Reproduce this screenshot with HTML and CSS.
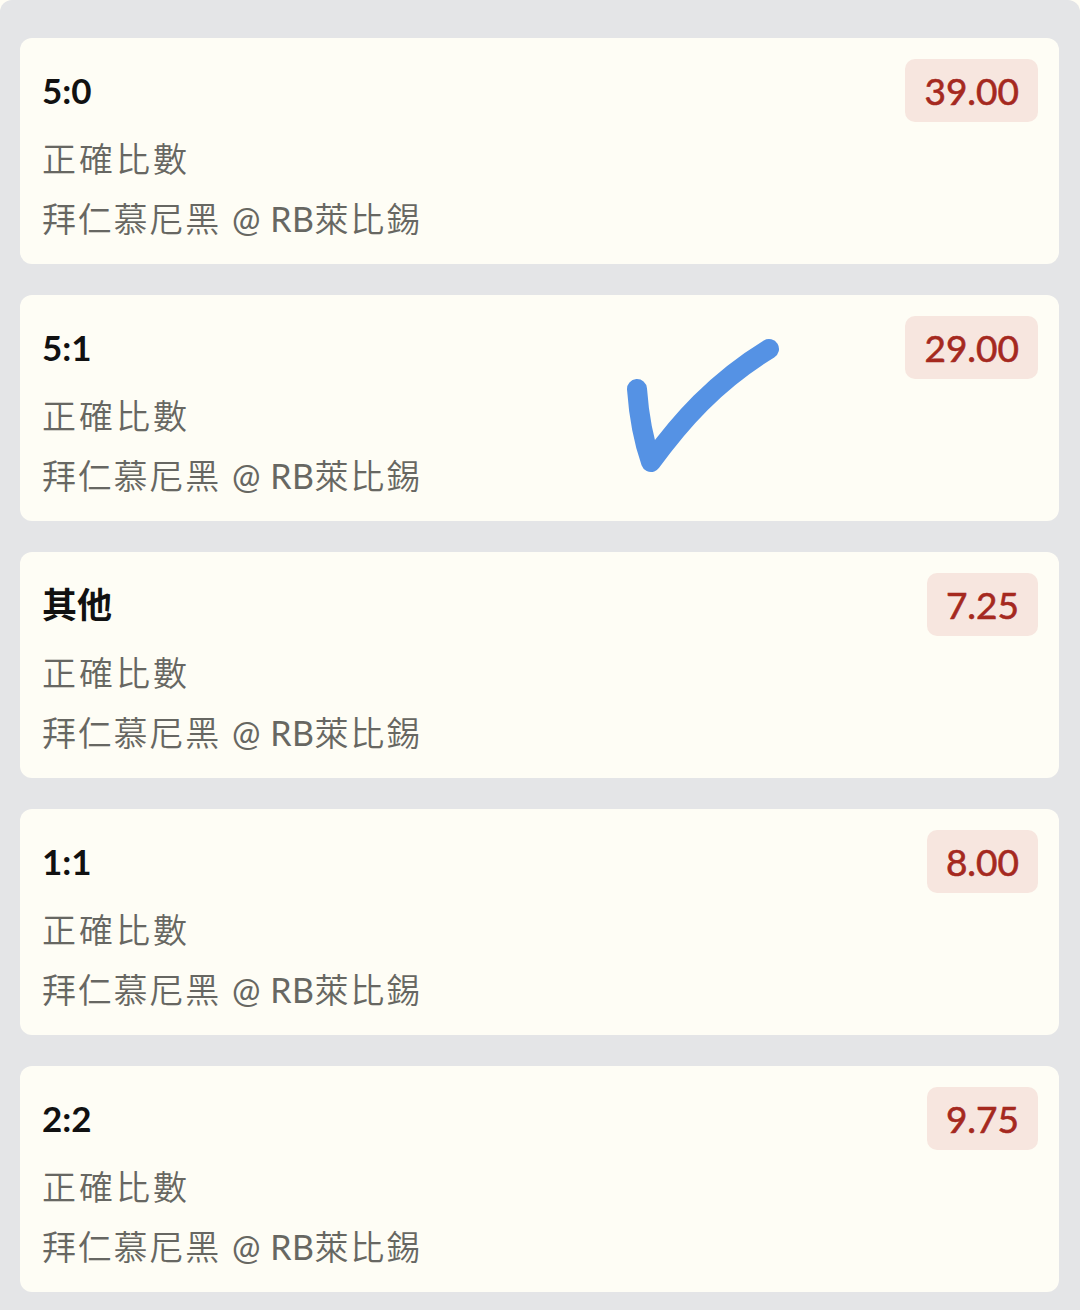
FILE: index.html
```html
<!DOCTYPE html>
<html lang="zh-Hant">
<head>
    <meta charset="UTF-8">
    <meta name="viewport" content="width=device-width, initial-scale=1.0">
    <title>正確比數</title>
    <link rel="stylesheet" href="styles.css">
</head>
<body>
    <div class="list">
        <div class="card">
            <div class="card-head">
                <span class="score">5:0</span>
                <span class="odds">39.00</span>
            </div>
            <div class="market">正確比數</div>
            <div class="match">拜仁慕尼黑 <span class="latin">@ RB</span>萊比錫</div>
        </div>

        <div class="card">
            <div class="card-head">
                <span class="score">5:1</span>
                <span class="odds">29.00</span>
            </div>
            <div class="market">正確比數</div>
            <div class="match">拜仁慕尼黑 <span class="latin">@ RB</span>萊比錫</div>
            <svg class="tick" width="180" height="150" viewBox="0 0 180 150">
                <path d="M17 52 C19 80 24 105 31 125 C60 85 95 45 149 12" fill="none" stroke="#5592e4" stroke-width="20" stroke-linecap="round" stroke-linejoin="round"/>
            </svg>
        </div>

        <div class="card">
            <div class="card-head">
                <span class="score">其他</span>
                <span class="odds">7.25</span>
            </div>
            <div class="market">正確比數</div>
            <div class="match">拜仁慕尼黑 <span class="latin">@ RB</span>萊比錫</div>
        </div>

        <div class="card">
            <div class="card-head">
                <span class="score">1:1</span>
                <span class="odds">8.00</span>
            </div>
            <div class="market">正確比數</div>
            <div class="match">拜仁慕尼黑 <span class="latin">@ RB</span>萊比錫</div>
        </div>

        <div class="card">
            <div class="card-head">
                <span class="score">2:2</span>
                <span class="odds">9.75</span>
            </div>
            <div class="market">正確比數</div>
            <div class="match">拜仁慕尼黑 <span class="latin">@ RB</span>萊比錫</div>
        </div>
    </div>
</body>
</html>
```

FILE: styles.css
```css
body {
    margin: 0;
    padding: 0;
    background-color: #fffdf4;
    font-family: 'Lato', 'Noto Sans CJK TC', sans-serif;
}
.list {
    display: flex;
    flex-direction: column;
    gap: 31px;
    padding: 38px 21px 40px 20px;
    background-color: #e4e5e7;
    border-radius: 12px 12px 0 0;
    min-height: 1232px;
}
.card {
    position: relative;
    padding: 21px 21px 15px 22px;
    background-color: #fefdf5;
    border-radius: 12px;
}
.card-head {
    display: flex;
    justify-content: space-between;
    align-items: center;
    height: 63px;
}
.score {
    font-size: 35px;
    font-weight: 700;
    color: #111;
    line-height: 63px;
}
.odds {
    height: 63px;
    line-height: 63px;
    padding: 0 19px;
    font-size: 37px;
    color: #a5291f;
    -webkit-text-stroke: 0.6px #a5291f;
    background-color: #f7e6df;
    border-radius: 10px;
}
.market, .match {
    font-size: 34px;
    font-weight: 350;
    line-height: 60px;
    color: #676762;
}
.market {
    margin-top: 7px;
    letter-spacing: 3px;
}
.match {
    letter-spacing: 1.8px;
}
.match .latin {
    font-weight: 400;
    letter-spacing: 0.5px;
}
.tick {
    position: absolute;
    left: 600px;
    top: 42px;
}
```
